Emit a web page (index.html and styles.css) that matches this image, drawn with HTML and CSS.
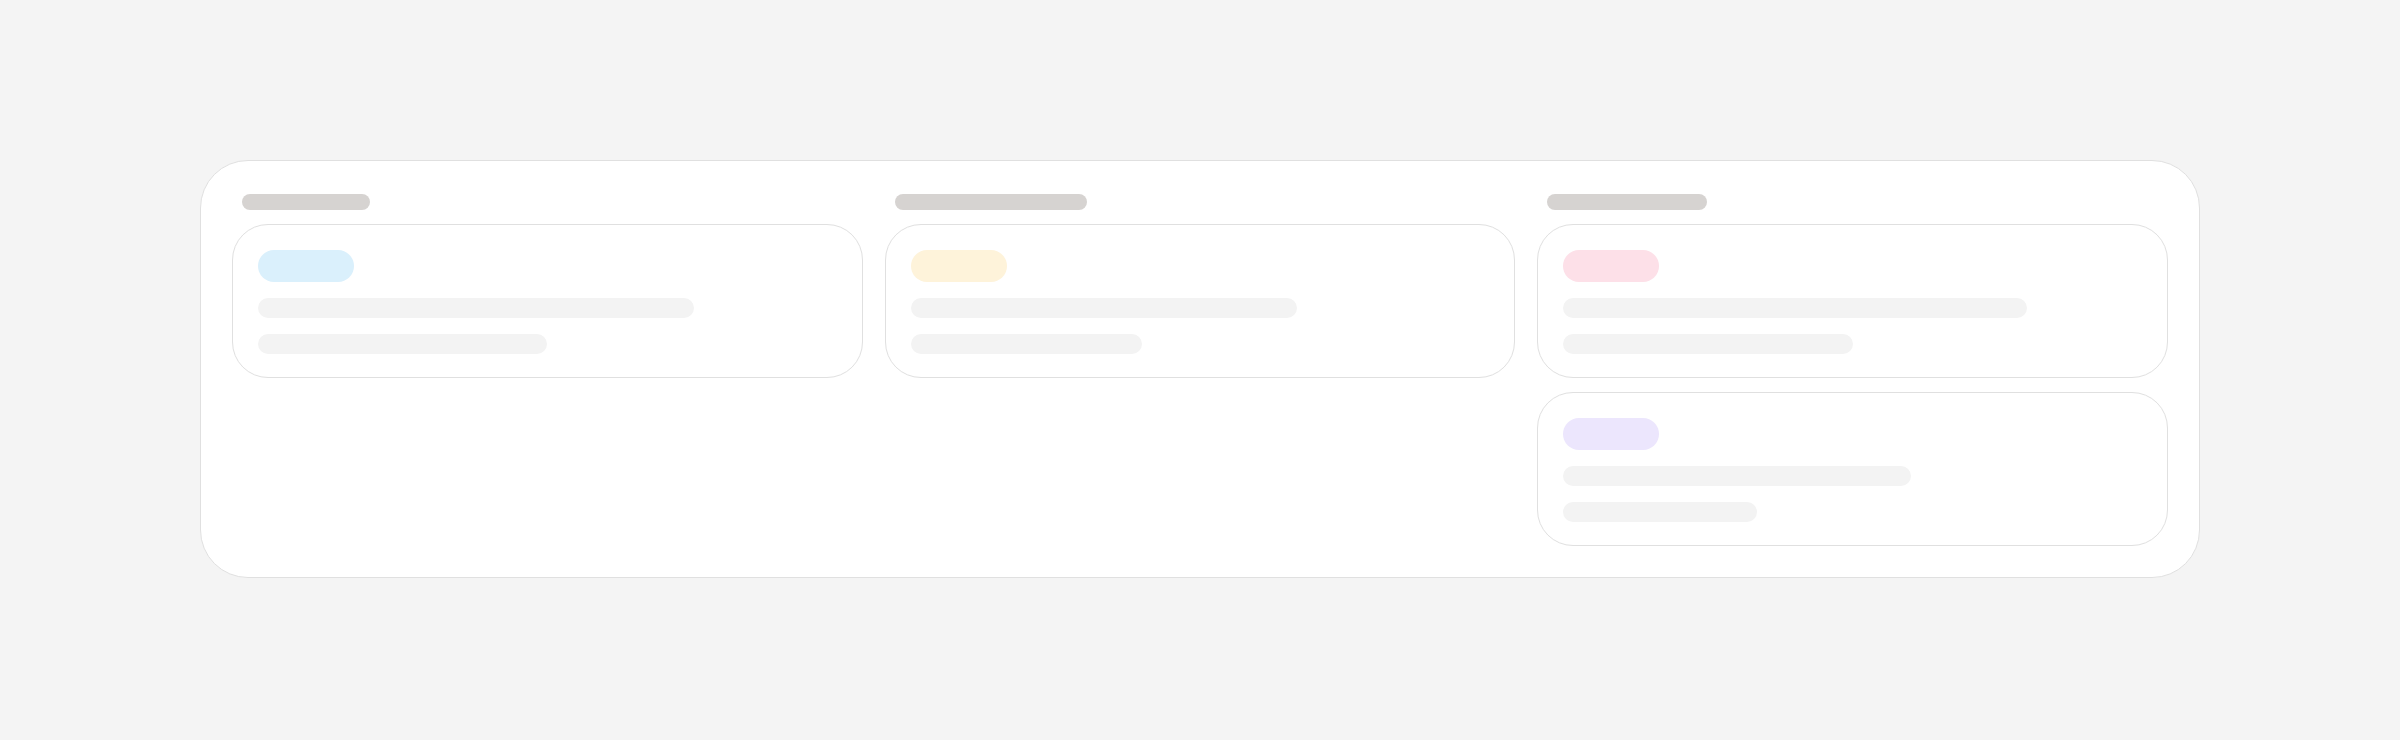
FILE: index.html
```html
<!DOCTYPE html>
<html lang="en">
<head>
  <meta charset="UTF-8" />
  <title>Board skeleton</title>
  <link rel="stylesheet" href="styles.css">
</head>
<body>
  <div class="board">
    <!-- Column 1 -->
    <section class="column">
      <div class="column-title w-128"></div>
      <div class="card">
        <div class="tag tag-blue"></div>
        <div class="line w-75"></div>
        <div class="line w-50"></div>
      </div>
    </section>

    <!-- Column 2 -->
    <section class="column">
      <div class="column-title w-192"></div>
      <div class="card">
        <div class="tag tag-amber"></div>
        <div class="line w-66"></div>
        <div class="line w-40"></div>
      </div>
    </section>

    <!-- Column 3 -->
    <section class="column">
      <div class="column-title w-160"></div>
      <div class="card">
        <div class="tag tag-pink"></div>
        <div class="line w-80"></div>
        <div class="line w-50"></div>
      </div>
      <div class="card">
        <div class="tag tag-violet"></div>
        <div class="line w-60"></div>
        <div class="line w-33"></div>
      </div>
    </section>
  </div>
</body>
</html>
```

FILE: styles.css
```css
:root {
  --page-bg: #f4f4f4;
  --surface: #ffffff;
  --border: #e0e0e0;
  --title-bar: #d6d3d1;
  --line: #f3f3f3;
}

body {
  margin: 0;
  background-color: var(--page-bg);
  font-family: "Inter", "Liberation Sans", sans-serif;
}

/* Outer board */
.board {
  box-sizing: border-box;
  width: 2000px;
  margin: 160px 200px 0;
  padding: 33px 31px 31px;
  background-color: var(--surface);
  border: 1px solid var(--border);
  border-radius: 48px;
  display: grid;
  grid-template-columns: repeat(3, 1fr);
  gap: 22px;
  align-items: start;
}

.column {
  display: flex;
  flex-direction: column;
  gap: 14px;
}

.column-title {
  height: 16px;
  margin-left: 10px;
  border-radius: 8px;
  background-color: var(--title-bar);
}
.w-128 { width: 128px; }
.w-160 { width: 160px; }
.w-192 { width: 192px; }

/* Task cards */
.card {
  padding: 25px 25px 23px;
  border: 1px solid var(--border);
  border-radius: 36px;
  background-color: var(--surface);
  display: flex;
  flex-direction: column;
  gap: 16px;
}

.tag {
  width: 96px;
  height: 32px;
  border-radius: 16px;
}
.tag-blue { background-color: #daf0fc; }
.tag-amber { background-color: #fef3da; }
.tag-pink { background-color: #fde0e8; }
.tag-violet { background-color: #ece6fd; }

.line {
  height: 20px;
  border-radius: 10px;
  background-color: var(--line);
}
.w-33 { width: 33.5%; }
.w-40 { width: 40%; }
.w-50 { width: 50%; }
.w-60 { width: 60%; }
.w-66 { width: 66.7%; }
.w-75 { width: 75.3%; }
.w-80 { width: 80.2%; }
```
